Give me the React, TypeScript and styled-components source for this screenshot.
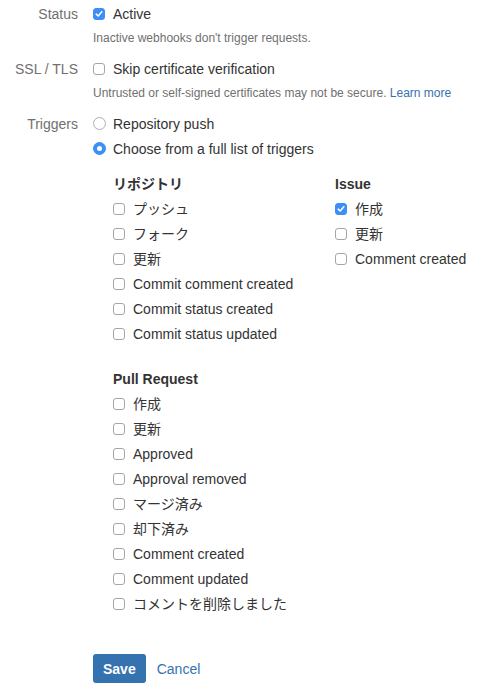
import React from "react";
import styled, { createGlobalStyle } from "styled-components";

const Global = createGlobalStyle`
  html, body { margin: 0; padding: 0; background: #fff; }
  body {
    font-family: "Liberation Sans", "Noto Sans CJK JP", Arial, sans-serif;
    font-size: 14px;
    color: #333;
  }
`;

const Page = styled.form`
  padding-top: 4px;
  display: flex;
  flex-direction: column;
  gap: 13px;
`;

const Field = styled.div`
  display: grid;
  grid-template-columns: 78px 1fr;
  column-gap: 15px;
`;

const Label = styled.div`
  text-align: right;
  color: #707070;
  line-height: 20px;
  font-size: 14px;
`;

const Body = styled.div`
  display: flex;
  flex-direction: column;
  gap: 5px;
`;

const Option = styled.label`
  display: flex;
  align-items: center;
  gap: 8px;
  height: 20px;
  line-height: 20px;
  font-size: 14px;
  color: #333;
  white-space: nowrap;
`;

const Box = styled.span<{ $checked?: boolean }>`
  width: 12px;
  height: 12px;
  box-sizing: border-box;
  border-radius: 3px;
  flex: none;
  display: flex;
  align-items: center;
  justify-content: center;
  background: ${(p) => (p.$checked ? "#3b8ff6" : "#fff")};
  border: 1px solid ${(p) => (p.$checked ? "#3b8ff6" : "#a6a6a6")};
  margin-top: -1px;
`;

const Radio = styled.span<{ $checked?: boolean }>`
  width: 13px;
  height: 13px;
  box-sizing: border-box;
  border-radius: 50%;
  flex: none;
  display: flex;
  align-items: center;
  justify-content: center;
  background: ${(p) => (p.$checked ? "#3b8ff6" : "#fff")};
  border: 1px solid ${(p) => (p.$checked ? "#3b8ff6" : "#b0b0b0")};
  margin-top: -1px;
  margin-right: -1px;
  &::after {
    content: "";
    display: ${(p) => (p.$checked ? "block" : "none")};
    width: 5px;
    height: 5px;
    border-radius: 50%;
    background: #fff;
  }
`;

const Description = styled.div`
  font-size: 12px;
  line-height: 16px;
  color: #707070;
  margin-top: 1px;
`;

const Link = styled.a`
  color: #3572b0;
  text-decoration: none;
`;

const Groups = styled.div`
  display: flex;
  flex-direction: column;
  gap: 25px;
  padding-left: 20px;
  margin-top: 10px;
`;

const GroupRow = styled.div`
  display: grid;
  grid-template-columns: 222px auto;
`;

const Group = styled.div`
  display: flex;
  flex-direction: column;
  gap: 5px;
`;

const GroupTitle = styled.div`
  font-weight: bold;
  font-size: 14px;
  line-height: 20px;
  color: #333;
`;

const Actions = styled.div`
  display: flex;
  align-items: center;
  gap: 11px;
  padding-left: 93px;
  margin-top: 27px;
`;

const SaveButton = styled.button`
  background: #3572b0;
  color: #fff;
  border: none;
  border-radius: 3px;
  font-family: inherit;
  font-size: 14px;
  font-weight: bold;
  height: 29px;
  padding: 0 10px;
`;

const Check = () => (
  <svg width="8" height="8" viewBox="0 0 8 8">
    <path d="M1.2 4.2 L3.2 6 L6.8 1.8" fill="none" stroke="#fff" strokeWidth="1.6" strokeLinecap="round" strokeLinejoin="round" />
  </svg>
);

const CheckItem = ({ label, checked }: { label: string; checked?: boolean }) => (
  <Option>
    <Box $checked={checked}>{checked && <Check />}</Box>
    {label}
  </Option>
);

const RadioItem = ({ label, checked }: { label: string; checked?: boolean }) => (
  <Option>
    <Radio $checked={checked} />
    {label}
  </Option>
);

const repo = ["プッシュ", "フォーク", "更新", "Commit comment created", "Commit status created", "Commit status updated"];
const issue: [string, boolean][] = [["作成", true], ["更新", false], ["Comment created", false]];
const pr = ["作成", "更新", "Approved", "Approval removed", "マージ済み", "却下済み", "Comment created", "Comment updated", "コメントを削除しました"];

export default function App() {
  return (
    <>
      <Global />
      <Page>
        <Field>
          <Label>Status</Label>
          <Body>
            <CheckItem label="Active" checked />
            <Description>Inactive webhooks don't trigger requests.</Description>
          </Body>
        </Field>
        <Field>
          <Label>SSL / TLS</Label>
          <Body>
            <CheckItem label="Skip certificate verification" />
            <Description>
              Untrusted or self-signed certificates may not be secure. <Link href="#">Learn more</Link>
            </Description>
          </Body>
        </Field>
        <Field>
          <Label>Triggers</Label>
          <Body>
            <RadioItem label="Repository push" />
            <RadioItem label="Choose from a full list of triggers" checked />
            <Groups>
              <GroupRow>
                <Group>
                  <GroupTitle>リポジトリ</GroupTitle>
                  {repo.map((r) => (
                    <CheckItem key={r} label={r} />
                  ))}
                </Group>
                <Group>
                  <GroupTitle>Issue</GroupTitle>
                  {issue.map(([l, c]) => (
                    <CheckItem key={l} label={l} checked={c} />
                  ))}
                </Group>
              </GroupRow>
              <Group>
                <GroupTitle>Pull Request</GroupTitle>
                {pr.map((r) => (
                  <CheckItem key={r} label={r} />
                ))}
              </Group>
            </Groups>
          </Body>
        </Field>
        <Actions>
          <SaveButton type="button">Save</SaveButton>
          <Link href="#">Cancel</Link>
        </Actions>
      </Page>
    </>
  );
}
